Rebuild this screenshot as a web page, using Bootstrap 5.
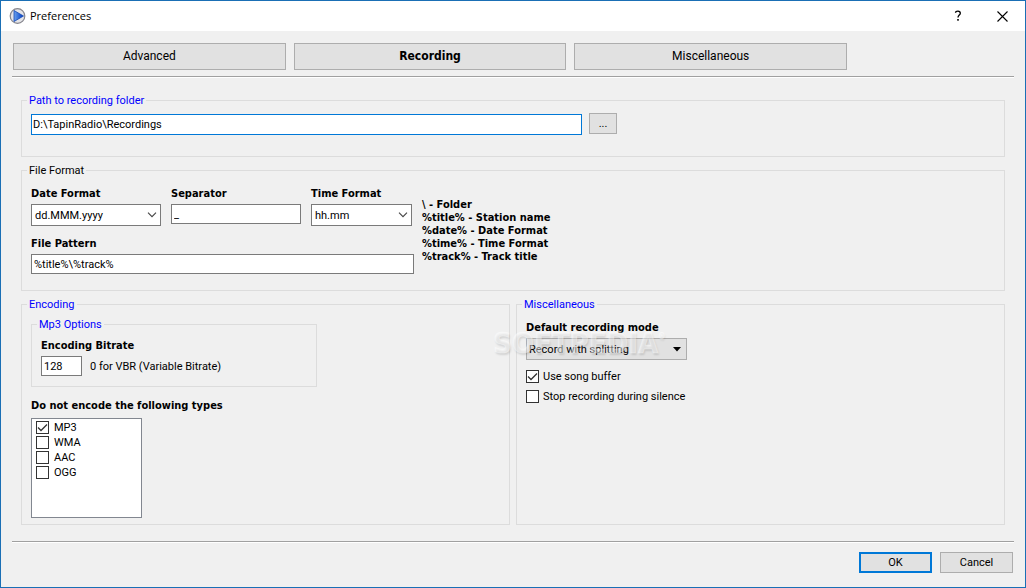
<!DOCTYPE html>
<html lang="en">
<head>
<meta charset="utf-8">
<meta name="viewport" content="width=device-width, initial-scale=1">
<title>Preferences</title>
<link href="https://cdn.jsdelivr.net/npm/bootstrap@5.3.0/dist/css/bootstrap.min.css" rel="stylesheet">
<style>
  body {
    font-family: Roboto, "Liberation Sans", sans-serif;
    font-size: 11px;
    line-height: 13px;
    color: #000;
    background: #f0f0f0;
  }
  .dialog { min-height: 100vh; border: 1px solid #1a6fb5; }
  .titlebar { height: 30px; padding-left: 8px; background: #fff; }
  .titlebar h1 { font: 11px/16px "Open Sans", sans-serif; margin: 0; }
  .caption-btn {
    width: 45px; height: 30px; padding: 0; border: 0; border-radius: 0;
    display: flex; align-items: center; justify-content: center; color: #000;
  }
  .win-btn {
    --bs-btn-font-size: 11px;
    --bs-btn-line-height: 13px;
    --bs-btn-padding-x: 4px;
    --bs-btn-padding-y: 3px;
    --bs-btn-border-radius: 0;
    --bs-btn-color: #000;
    --bs-btn-bg: #e1e1e1;
    --bs-btn-border-color: #adadad;
    --bs-btn-hover-color: #000;
    --bs-btn-hover-bg: #e5f1fb;
    --bs-btn-hover-border-color: #0078d7;
  }
  .tab-row { max-width: 858px; gap: 8px; padding: 12px 12px 6px; }
  .tab-row .win-btn { --bs-btn-font-size: 12px; flex: 1 1 0; height: 27px; }
  .dialog-btn { width: 73px; height: 21px; }
  .dialog-btn.default-btn { border: 2px solid #0078d7; padding-top: 2px; padding-bottom: 2px; }
  .browse-btn { width: 28px; height: 21px; margin-top: -1px; }
  .etched { height: 2px; margin: 0 11px; border-top: 1px solid #a0a0a0; border-bottom: 1px solid #fff; }
  .page-body { padding: 16px 20px; }

  .group-box { border: 1px solid #dcdcdc; padding: 0 9px; }
  .group-box > legend {
    float: none; width: auto; margin: 0 0 0 -4px; padding: 0 2px;
    font-size: 11px; line-height: 13px;
  }
  .blue-title > legend { color: #00f; }
  .field-title { display: block; margin-bottom: 4px; }
  .heavy { font-family: "DejaVu Sans Condensed", "DejaVu Sans", sans-serif; font-weight: 700; }

  .win-input.form-control, .win-select.form-select {
    font-size: 11px; line-height: 13px; color: #000; border-radius: 0;
    border: 1px solid #7a7a7a; background-color: #fff; box-shadow: none;
  }
  .win-input.form-control { min-height: 0; height: 20px; padding: 2px; }
  .win-input.path-input { max-width: 551px; height: 21px; border-color: #0078d7; padding-left: 1px; }
  .win-select.form-select {
    height: 22px; padding: 3px 18px 3px 3px;
    background-image: url("data:image/svg+xml,%3Csvg xmlns='http://www.w3.org/2000/svg' width='10' height='6'%3E%3Cpath d='M1 .7 5 4.7 9 .7' fill='none' stroke='%23444' stroke-width='1.1'/%3E%3C/svg%3E");
    background-size: 10px 6px; background-position: right 3px center;
  }
  .win-select.flat-select {
    background-color: #e1e1e1; border-color: #adadad; padding-left: 2px;
    background-image: url("data:image/svg+xml,%3Csvg xmlns='http://www.w3.org/2000/svg' width='8' height='5'%3E%3Cpath d='M0 0H8L4 4.5Z'/%3E%3C/svg%3E");
    background-size: 8px 5px; background-position: right 5px center;
  }
  .w-field { width: 130px; }
  .w-time { width: 101px; }
  .w-mode { width: 161px; }
  .w-rate { width: 41px; }
  .pattern-block { width: 383px; }

  .win-check { min-height: 0; padding: 0; margin: 0; display: flex; align-items: center; }
  .win-check .form-check-input {
    float: none; margin: 0 4px 0 0; width: 13px; height: 13px; flex: none;
    border: 1px solid #333; border-radius: 0; background-color: #fff; box-shadow: none;
  }
  .win-check .form-check-input:checked {
    background-image: url("data:image/svg+xml,%3Csvg xmlns='http://www.w3.org/2000/svg' width='11' height='11'%3E%3Cpath d='M1 5.5 4 8.500 10 2.500' fill='none' stroke='%23333' stroke-width='1.3'/%3E%3C/svg%3E");
    background-size: 11px 11px;
  }
  .type-list { width: 111px; height: 100px; padding: 1px 4px; border: 1px solid #828790; background: #fff; overflow: auto; }
  .type-list .win-check { height: 15px; }
  .type-list .form-check-input { margin-right: 5px; }

  .mode-field { position: relative; }
  .watermark {
    position: absolute; left: -33px; top: -5px; pointer-events: none; white-space: nowrap;
    font: 700 29px/20px "DejaVu Sans Condensed", "DejaVu Sans", sans-serif;
    color: rgba(255, 255, 255, .45);
    -webkit-text-stroke: 1px rgba(255, 255, 255, .3);
    text-shadow: 1px 2px 2px rgba(0, 0, 0, .12);
  }
  .watermark small { font-size: 8px; line-height: 8px; vertical-align: 14px; }

  .path-row { gap: 7px; padding: 7px 0 21px; }
  .format-box { margin-top: 7px; }
  .format-row { gap: 8px; padding: 10px 0 16px; }
  .top-fields { gap: 10px; margin-bottom: 11px; }
  .legend-text { padding-top: 11px; }
  .columns { gap: 6px; margin-top: 7px; }
  .columns > .group-box { flex: 1 1 0; }
  .encoding-box { padding-bottom: 6px; }
  .mp3-box { max-width: 286px; margin-top: 7px; padding-bottom: 10px; }
  .rate-title { margin-top: 8px; }
  .types-title { margin: 12px 0 6px; }
  .mode-title { margin-top: 10px; }
  .buffer-check { margin-top: 10px; }
  .silence-check { margin-top: 7px; }
  .footer-row { padding: 9px 12px 14px; }
</style>
</head>
<body>
<div class="dialog d-flex flex-column">
  <header class="titlebar d-flex align-items-center">
    <svg width="17" height="17" viewBox="0 0 17 17" aria-hidden="true">
      <defs><linearGradient id="blue" x1="0" x2="1"><stop offset="0" stop-color="#6aa0ee"/><stop offset=".7" stop-color="#1c58d0"/><stop offset="1" stop-color="#0b3cae"/></linearGradient></defs>
      <circle cx="8.500" cy="8" r="7.300" fill="#e4e4e8" stroke="#85858c" stroke-width="1.200"/>
      <path d="M5 2.500 14.500 8 5 13.500Z" fill="url(#blue)" stroke="#174ab5" stroke-width=".8"/>
    </svg>
    <h1 class="ms-1 me-auto">Preferences</h1>
    <button type="button" class="btn caption-btn" aria-label="Help">
      <svg width="8" height="12" viewBox="0 0 8 12"><path d="M1.500 2.800C1.700.6 6.300.3 6.300 3.200 6.300 5 4 5.200 4 7.500" fill="none" stroke="#000" stroke-width="1.300"/><rect x="3.200" y="9" width="1.600" height="1.700"/></svg>
    </button>
    <button type="button" class="btn caption-btn" aria-label="Close">
      <svg width="11" height="11" viewBox="0 0 11 11"><path d="M.5.5 10.500 10.500M10.500.5.5 10.500" stroke="#000" stroke-width="1.100"/></svg>
    </button>
  </header>

  <nav class="tab-row d-flex">
    <button type="button" class="btn win-btn">Advanced</button>
    <button type="button" class="btn win-btn heavy">Recording</button>
    <button type="button" class="btn win-btn">Miscellaneous</button>
  </nav>
  <div class="etched"></div>

  <main class="page-body">
    <fieldset class="group-box blue-title">
      <legend>Path to recording folder</legend>
      <div class="d-flex path-row">
        <input type="text" class="form-control win-input path-input" aria-label="Path to recording folder" value="D:\TapinRadio\Recordings">
        <button type="button" class="btn win-btn browse-btn" aria-label="Browse">...</button>
      </div>
    </fieldset>

    <fieldset class="group-box format-box">
      <legend>File Format</legend>
      <div class="d-flex format-row">
        <div class="pattern-block flex-shrink-0">
          <div class="d-flex top-fields">
            <div>
              <label class="field-title heavy" for="date">Date Format</label>
              <select id="date" class="form-select win-select w-field"><option>dd.MMM.yyyy</option></select>
            </div>
            <div>
              <label class="field-title heavy" for="sep">Separator</label>
              <input id="sep" type="text" class="form-control win-input w-field" value="_">
            </div>
            <div>
              <label class="field-title heavy" for="time">Time Format</label>
              <select id="time" class="form-select win-select w-time"><option>hh.mm</option></select>
            </div>
          </div>
          <label class="field-title heavy" for="pattern">File Pattern</label>
          <input id="pattern" type="text" class="form-control win-input" value="%title%\%track%">
        </div>
        <div class="legend-text heavy">
          <div>\ - Folder</div>
          <div>%title% - Station name</div>
          <div>%date% - Date Format</div>
          <div>%time% - Time Format</div>
          <div>%track% - Track title</div>
        </div>
      </div>
    </fieldset>

    <div class="d-flex columns">
      <fieldset class="group-box blue-title encoding-box">
        <legend>Encoding</legend>
        <fieldset class="group-box blue-title mp3-box">
          <legend>Mp3 Options</legend>
          <label class="field-title heavy rate-title" for="rate">Encoding Bitrate</label>
          <div class="d-flex align-items-center gap-2">
            <input id="rate" type="text" class="form-control win-input w-rate" value="128">
            <span>0 for VBR (Variable Bitrate)</span>
          </div>
        </fieldset>
        <div class="heavy types-title" id="types">Do not encode the following types</div>
        <div class="type-list" role="group" aria-labelledby="types">
          <div class="form-check win-check"><input class="form-check-input" type="checkbox" id="mp3" checked><label for="mp3">MP3</label></div>
          <div class="form-check win-check"><input class="form-check-input" type="checkbox" id="wma"><label for="wma">WMA</label></div>
          <div class="form-check win-check"><input class="form-check-input" type="checkbox" id="aac"><label for="aac">AAC</label></div>
          <div class="form-check win-check"><input class="form-check-input" type="checkbox" id="ogg"><label for="ogg">OGG</label></div>
        </div>
      </fieldset>

      <fieldset class="group-box blue-title">
        <legend>Miscellaneous</legend>
        <label class="field-title heavy mode-title" for="mode">Default recording mode</label>
        <div class="mode-field">
          <select id="mode" class="form-select win-select flat-select w-mode"><option>Record with splitting</option></select>
          <div class="watermark">SOFTPEDIA<small>®</small></div>
        </div>
        <div class="form-check win-check buffer-check"><input class="form-check-input" type="checkbox" id="buffer" checked><label for="buffer">Use song buffer</label></div>
        <div class="form-check win-check silence-check"><input class="form-check-input" type="checkbox" id="silence"><label for="silence">Stop recording during silence</label></div>
      </fieldset>
    </div>
  </main>

  <footer class="mt-auto">
    <div class="etched"></div>
    <div class="footer-row d-flex justify-content-end gap-2">
      <button type="button" class="btn win-btn dialog-btn default-btn">OK</button>
      <button type="button" class="btn win-btn dialog-btn">Cancel</button>
    </div>
  </footer>
</div>
<script src="https://cdn.jsdelivr.net/npm/bootstrap@5.3.0/dist/js/bootstrap.bundle.min.js"></script>
</body>
</html>
